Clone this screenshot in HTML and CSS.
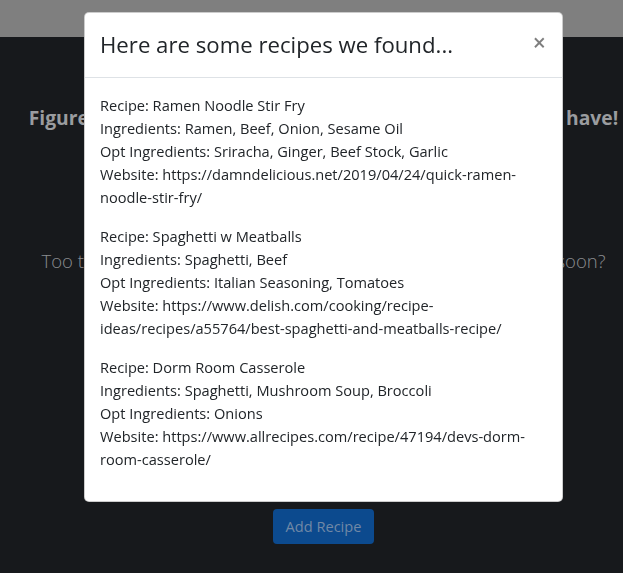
FILE: index.html
```html
<!DOCTYPE html>
<html lang="en">
<head>
    <meta charset="UTF-8">
    <meta name="viewport" content="width=device-width, initial-scale=1.0">
    <title>Recipe Finder</title>
    <link rel="stylesheet" href="styles.css">
</head>
<body>
    <div class="page">
        <nav class="navbar"></nav>
        <main class="hero">
            <h2 class="hero-title">Figure out what you can make with the ingredients you have!</h2>
            <p class="hero-lead">Too tired to go to the store? Got some ingredients that expire soon?</p>
            <button class="btn-add">Add Recipe</button>
        </main>
    </div>

    <div class="modal">
        <div class="modal-content">
            <div class="modal-header">
                <h4 class="modal-title">Here are some recipes we found...</h4>
                <button class="close">&times;</button>
            </div>
            <div class="modal-body">
                <p>Recipe: Ramen Noodle Stir Fry<br>
                Ingredients: Ramen, Beef, Onion, Sesame Oil<br>
                Opt Ingredients: Sriracha, Ginger, Beef Stock, Garlic<br>
                Website: https://damndelicious.net/2019/04/24/quick-ramen-noodle-stir-fry/</p>
                <p>Recipe: Spaghetti w Meatballs<br>
                Ingredients: Spaghetti, Beef<br>
                Opt Ingredients: Italian Seasoning, Tomatoes<br>
                Website: https://www.delish.com/cooking/recipe-ideas/recipes/a55764/best-spaghetti-and-meatballs-recipe/</p>
                <p>Recipe: Dorm Room Casserole<br>
                Ingredients: Spaghetti, Mushroom Soup, Broccoli<br>
                Opt Ingredients: Onions<br>
                Website: https://www.allrecipes.com/recipe/47194/devs-dorm-room-casserole/</p>
            </div>
        </div>
    </div>
</body>
</html>
```

FILE: styles.css
```css
html, body {
    margin: 0;
    padding: 0;
    height: 100%;
    overflow: hidden;
}
body {
    font-family: "Open Sans", "Noto Sans", sans-serif;
    background-color: #17191c;
}
.page {
    width: 647px;
    min-height: 100%;
}
.navbar {
    height: 37px;
    background-color: #7f7f7f;
}
.hero {
    display: flex;
    flex-direction: column;
    align-items: center;
    text-align: center;
}
.hero-title {
    margin: 69px 0 0;
    font-size: 19.3px;
    font-weight: 700;
    line-height: 1.2;
    color: #9a9c9f;
    white-space: nowrap;
}
.hero-lead {
    margin: 118px 0 0;
    font-size: 18.5px;
    font-weight: 300;
    line-height: 1.5;
    color: #8b8d90;
    white-space: nowrap;
}
.btn-add {
    margin-top: 234px;
    padding: 6px 12.5px;
    font-family: inherit;
    font-size: 14.6px;
    line-height: 23px;
    color: #7088a6;
    background-color: #0c4a8e;
    border: none;
    border-radius: 4px;
}

/* modal sits over the dimmed page */
.modal {
    position: fixed;
    top: 0;
    left: 0;
    width: 647px;
    height: 100%;
}
.modal-content {
    width: 479px;
    margin: 12px auto 0;
    box-sizing: border-box;
    background-color: #fff;
    border: 1px solid rgba(0, 0, 0, 0.2);
    border-radius: 5px;
    color: #212529;
}
.modal-header {
    display: flex;
    justify-content: space-between;
    align-items: flex-start;
    padding: 19px 15px 18px;
    border-bottom: 1px solid #dee2e6;
}
.modal-title {
    margin: 0;
    font-size: 22.2px;
    font-weight: 500;
    line-height: 1.2;
}
.close {
    margin: -1px 1px 0 0;
    padding: 0;
    font-family: inherit;
    font-size: 23px;
    font-weight: 600;
    line-height: 1;
    color: #000;
    opacity: 0.5;
    background: transparent;
    border: 0;
}
.modal-body {
    padding: 16px 15px 14px;
}
.modal-body p {
    margin: 0 0 16px;
    font-size: 14.6px;
    line-height: 23px;
}
```
